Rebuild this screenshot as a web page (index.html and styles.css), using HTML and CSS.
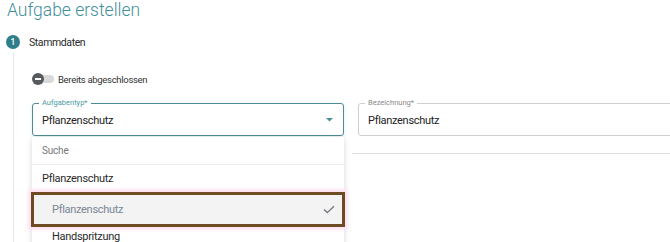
FILE: index.html
```html
<!DOCTYPE html>
<html lang="de">
<head>
<meta charset="utf-8">
<link rel="stylesheet" href="styles.css">
</head>
<body>
<div class="page">
  <h1 class="title">Aufgabe erstellen</h1>
  <div class="step">
    <span class="step-num">1</span>
    <span class="step-label">Stammdaten</span>
  </div>
  <div class="step-body">
    <div class="toggle-row">
      <span class="toggle"><span class="knob"></span></span>
      <span class="toggle-label">Bereits abgeschlossen</span>
    </div>
    <div class="fields">
      <div class="field field-select">
        <span class="field-label sel-label">Aufgabentyp*</span>
        <span class="field-value">Pflanzenschutz</span>
        <svg class="caret" width="7" height="4" viewBox="0 0 7 4"><path d="M0 0 L7 0 L3.5 3.5 Z" fill="#4d8e97"/></svg>
        <div class="dropdown">
          <div class="search">Suche</div>
          <div class="group">Pflanzenschutz</div>
          <div class="option selected">
            <span>Pflanzenschutz</span>
            <svg class="check" width="12" height="9" viewBox="0 0 12 9"><path d="M1 4.6 L4.3 7.6 L11 1.2" fill="none" stroke="#6f757c" stroke-width="1.3"/></svg>
          </div>
          <div class="option">Handspritzung</div>
        </div>
      </div>
      <div class="field field-text">
        <span class="field-label">Bezeichnung*</span>
        <span class="field-value">Pflanzenschutz</span>
      </div>
    </div>
    <div class="divider"></div>
  </div>
</div>
</body>
</html>
```
FILE: styles.css
```css
* { box-sizing: border-box; }
html, body { margin: 0; padding: 0; background: #fff; }
body {
  width: 670px;
  height: 242px;
  overflow: hidden;
  font-family: Roboto, "Liberation Sans", sans-serif;
  color: #262626;
}
.page { padding: 0 0 0 6px; }
.title {
  margin: 0;
  padding-left: 1px;
  font-size: 17.5px;
  font-weight: 300;
  line-height: 21px;
  color: #3f8f9a;
}
.step {
  display: flex;
  align-items: center;
  margin-top: 14px;
  height: 14px;
}
.step-num {
  width: 14px;
  height: 14px;
  border-radius: 50%;
  background: #2f7e8b;
  color: #fff;
  font-size: 8.5px;
  font-weight: 500;
  display: flex;
  align-items: center;
  justify-content: center;
}
.step-label {
  margin-left: 9px;
  font-size: 10.5px;
  letter-spacing: -0.4px;
  color: #2a2a2a;
}
.step-body {
  margin-left: 7px;
  margin-top: 3px;
  border-left: 1px solid #e8e8e8;
  padding-left: 18px;
  padding-top: 20px;
  height: 200px;
}
.toggle-row {
  display: flex;
  align-items: center;
  height: 14px;
}
.toggle {
  position: relative;
  width: 21px;
  height: 8px;
  border-radius: 4px;
  background: #d9d9d9;
  margin-left: 1px;
  margin-right: 4px;
}
.knob {
  position: absolute;
  left: -1px;
  top: -2px;
  width: 12px;
  height: 12px;
  border-radius: 50%;
  background: #555a5e;
}
.knob::after {
  content: "";
  position: absolute;
  left: 3px;
  top: 5.25px;
  width: 6px;
  height: 1.5px;
  background: #fff;
}
.toggle-label {
  font-size: 9.5px;
  letter-spacing: -0.3px;
  color: #333;
}
.fields {
  display: flex;
  margin-top: 17px;
  gap: 14px;
}
.field {
  position: relative;
  height: 33px;
  border-radius: 3px;
  display: flex;
  align-items: center;
  padding-left: 9px;
}
.field-select {
  width: 312px;
  border: 1px solid #4f8b94;
  box-shadow: 0 1px 4px rgba(80, 170, 180, 0.2);
}
.field-text {
  flex: 1;
  margin-right: -20px;
  border: 1px solid #cfcfcf;
}
.field-label {
  position: absolute;
  top: -6px;
  left: 6px;
  padding: 0 3px;
  background: #fff;
  font-size: 7.5px;
  line-height: 10px;
  color: #8a8a8a;
}
.sel-label { color: #4b9aa5; }
.field-value {
  font-size: 11px;
  letter-spacing: -0.3px;
  color: #222;
  padding-top: 1px;
}
.caret {
  position: absolute;
  right: 10px;
  top: 14px;
}
.dropdown {
  position: absolute;
  left: -1px;
  top: 33px;
  width: 312px;
  background: #fff;
  box-shadow: 0 2px 6px rgba(0, 0, 0, 0.16);
  z-index: 5;
}
.search {
  height: 28px;
  line-height: 27px;
  padding-left: 10px;
  font-size: 10px;
  letter-spacing: -0.2px;
  color: #777;
  border-bottom: 1px solid #ececec;
}
.group {
  height: 27px;
  line-height: 28px;
  padding-left: 10px;
  font-size: 11px;
  letter-spacing: -0.3px;
  color: #2a2a2a;
}
.option {
  height: 22px;
  line-height: 19px;
  padding-left: 20px;
  font-size: 11px;
  letter-spacing: -0.3px;
  color: #2a2a2a;
}
.option.selected {
  position: relative;
  height: 35px;
  line-height: normal;
  margin-left: -1px;
  margin-right: -1px;
  display: flex;
  align-items: center;
  justify-content: space-between;
  padding-right: 7px;
  padding-left: 18px;
  background: #f3f3f3;
  color: #7a8794;
  border: 3px solid #6e4b22;
  box-shadow: 0 0 3px 3px #fce4f2;
}
.check { margin-top: -1px; }
.divider {
  margin-left: 320px;
  margin-top: 17px;
  height: 1px;
  background: #dcdcdc;
  margin-right: -20px;
}
```
